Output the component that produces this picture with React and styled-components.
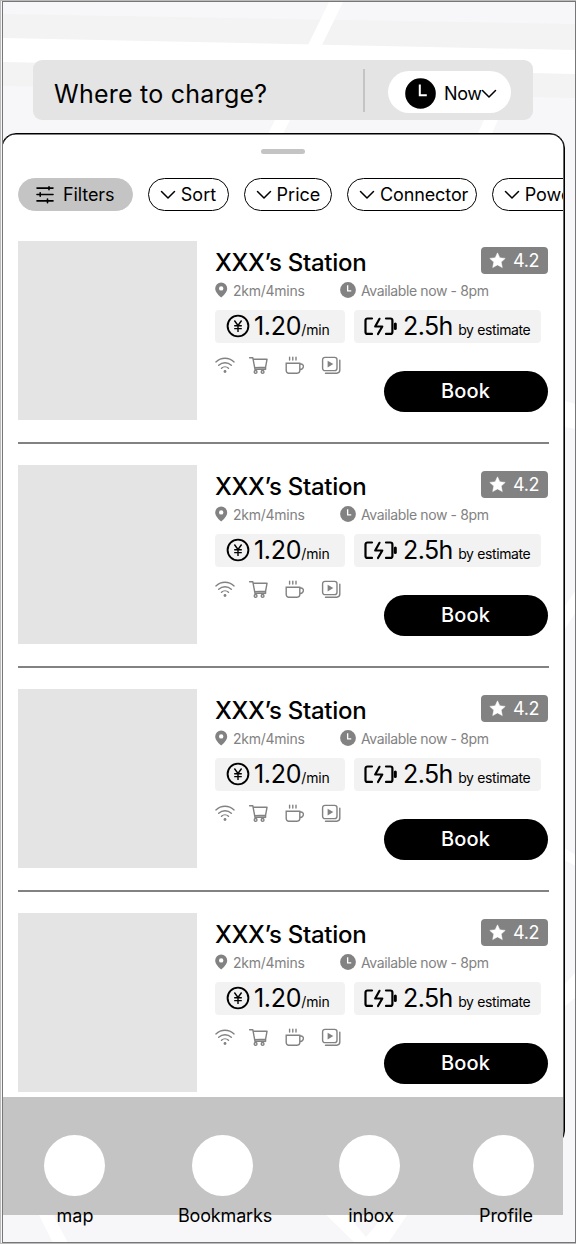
import React from 'react'
import styled, { createGlobalStyle } from 'styled-components'

const GlobalStyle = createGlobalStyle`
  * {
    box-sizing: border-box;
  }

  body {
    margin: 0;
    background: #f7f6f9;
    font-family: Inter, 'Liberation Sans', sans-serif;
    color: #000;
  }
`

const Screen = styled.div`
  position: relative;
  width: 576px;
  height: 1244px;
  overflow: hidden;
  background: #f7f6f9;
  border: 1px solid #bbb;
  border-width: 1px 0 1px 1px;
`

const Frame = styled.div`
  display: flex;
  flex-direction: column;
  position: relative;
  height: 1242px;
  margin-left: 1px;
  overflow: hidden;
  border: 1px solid #777;
`

const MapArt = styled.svg`
  position: absolute;
  top: 0;
  left: 0;
`

const SearchBar = styled.div`
  position: relative;
  display: flex;
  align-items: center;
  width: 500px;
  height: 60px;
  margin: 58px 0 0 30px;
  padding-left: 21px;
  flex-shrink: 0;
  background: #e4e4e4;
  border-radius: 9px;
`

const Placeholder = styled.span`
  width: 309px;
  margin-top: 7px;
  font-size: 25px;
  letter-spacing: 0.25px;
  white-space: nowrap;
`

const Divider = styled.div`
  width: 2px;
  height: 43px;
  margin-right: 23px;
  background: #c4c4c4;
`

const TimePill = styled.div`
  display: flex;
  align-items: center;
  width: 123px;
  height: 42px;
  padding: 4px 0 0 17px;
  margin-top: 3px;
  background: #fff;
  border-radius: 21px;
  font-size: 18px;
`

const NowText = styled.span`
  width: 37px;
  margin-left: 8px;
  letter-spacing: -0.35px;
  white-space: nowrap;
`

const Sheet = styled.div`
  position: relative;
  width: 564px;
  height: 1013px;
  margin: 13px 0 0 -2px;
  flex-shrink: 0;
  overflow: hidden;
  background: #fff;
  border: 1px solid #000;
  border-radius: 15px;
  box-shadow: inset 0 0 0 0.6px #000;
`

const Handle = styled.div`
  width: 44px;
  height: 5px;
  margin: 15px 0 0 259px;
  background: #c4c4c4;
  border-radius: 2.5px;
`

const Chips = styled.div`
  display: flex;
  gap: 14.8px;
  margin: 24px 1px 0 0;
  padding-left: 16px;
  overflow: hidden;
`

const Chip = styled.div`
  display: flex;
  align-items: center;
  flex-shrink: 0;
  width: ${(props) => props.$width}px;
  height: 33px;
  padding-left: ${(props) => (props.$filled ? 16 : 11)}px;
  gap: ${(props) => (props.$filled ? 8 : 5)}px;
  background: ${(props) => (props.$filled ? '#c4c4c4' : '#fff')};
  border: 1px solid ${(props) => (props.$filled ? '#c4c4c4' : '#000')};
  border-radius: 17px;
  font-size: 18px;
  letter-spacing: ${(props) => props.$spacing || 0}px;
  white-space: nowrap;
`

const List = styled.div`
  margin: 30px 0 0 16px;
  width: 531px;
`

const Card = styled.div`
  display: flex;
  height: 224px;
`

const Photo = styled.div`
  width: 179px;
  height: 179px;
  flex-shrink: 0;
  background: #e4e4e4;
`

const Info = styled.div`
  display: flex;
  flex-direction: column;
  width: 333px;
  margin-left: 18px;
`

const TitleRow = styled.div`
  display: flex;
  justify-content: space-between;
  height: 39px;
  padding-top: 6px;
`

const Title = styled.h2`
  margin: 0;
  font-size: 24px;
  line-height: 32px;
  font-weight: 500;
  letter-spacing: -0.3px;
`

const Rating = styled.div`
  display: flex;
  align-items: center;
  width: 67px;
  height: 27px;
  padding-left: 8px;
  gap: 7px;
  background: #828282;
  border-radius: 4px;
  color: #fff;
  font-size: 18px;
  letter-spacing: -0.3px;
`

const MetaRow = styled.div`
  display: flex;
  align-items: center;
  height: 20px;
  color: #828282;
  font-size: 14px;
`

const Meta = styled.span`
  display: flex;
  align-items: center;
  gap: 5px;
  width: ${(props) => props.$width}px;
  letter-spacing: ${(props) => props.$spacing}px;
  white-space: nowrap;
`

const StatRow = styled.div`
  display: flex;
  gap: 9px;
  margin-top: 10px;
`

const Stat = styled.div`
  display: flex;
  align-items: center;
  width: ${(props) => props.$width}px;
  height: 33px;
  padding: 0 0 2px ${(props) => props.$pad}px;
  background: #f2f2f2;
  border-radius: 4px;
  white-space: nowrap;
`

const StatText = styled.span`
  display: flex;
  align-items: baseline;
  margin-left: ${(props) => props.$gap}px;
`

const Value = styled.span`
  font-size: 25px;
  letter-spacing: ${(props) => props.$spacing}px;
`

const Unit = styled.span`
  font-size: 14px;
  letter-spacing: ${(props) => props.$spacing || 0}px;
  margin-left: ${(props) => props.$gap || 0}px;
`

const BottomRow = styled.div`
  display: flex;
  justify-content: space-between;
`

const Amenities = styled.div`
  display: flex;
  margin-top: 13px;
  gap: 15.2px;
  color: #828282;
`

const BookButton = styled.button`
  width: 164px;
  height: 41px;
  margin: 28px 0 0;
  padding: 0 1px 0 0;
  background: #000;
  border: 0;
  border-radius: 21px;
  color: #fff;
  font-family: inherit;
  font-size: 20px;
  line-height: 41px;
  font-weight: 500;
  letter-spacing: 0.15px;
`

const Rule = styled.hr`
  width: 531px;
  height: 1.5px;
  margin: -23px 0 21.5px;
  border: 0;
  background: #828282;
`

const TabBar = styled.nav`
  position: absolute;
  left: 0;
  bottom: 27px;
  display: flex;
  width: 560px;
  height: 118px;
  padding: 38px 0 0 41px;
  background: #c4c4c4;
`

const Tab = styled.div`
  display: flex;
  flex-direction: column;
  align-items: center;
  width: 61px;
  margin-right: ${(props) => props.$gap}px;
`

const TabCircle = styled.div`
  width: 61px;
  height: 61px;
  flex-shrink: 0;
  background: #fff;
  border-radius: 50%;
`

const TabLabel = styled.span`
  margin: ${(props) => props.$shift || '9px 0 0'};
  font-size: 18px;
  line-height: 22px;
  letter-spacing: ${(props) => props.$spacing}px;
  white-space: nowrap;
`

const Chevron = () => (
  <svg width="16" height="10" viewBox="0 0 16 10" fill="none" stroke="currentColor" strokeWidth="1.5" strokeLinecap="round" strokeLinejoin="round">
    <path d="M1.5 1.5 8 8l6.5-6.5" />
  </svg>
)

const ClockIcon = ({ size, hand }) => (
  <svg width={size} height={size} viewBox="0 0 31 31" fill="none">
    <circle cx="15.5" cy="15.5" r="15.3" fill="currentColor" />
    <path d="M14.8 6.5v10.7h7" stroke="#fff" strokeWidth={hand} />
  </svg>
)

const FilterIcon = () => (
  <svg width="20" height="18" viewBox="0 0 20 18" fill="none" stroke="#000" strokeWidth="1.6" strokeLinecap="round">
    <path d="M2 2.1h16M2 8.5h16M2 14.9h16M14 .8v2.9M5.2 6.7v3.6M12.5 13.1v3.6" />
  </svg>
)

const StarIcon = () => (
  <svg width="17" height="17" viewBox="0 0 17 17" fill="#fff">
    <path d="m8.5.8 2.3 5 5.4.6-4 3.7 1.1 5.5-4.8-2.7-4.8 2.7 1.1-5.5-4-3.7 5.4-.6z" stroke="#fff" strokeWidth=".5" strokeLinejoin="round" />
  </svg>
)

const PinIcon = () => (
  <svg width="13" height="16" viewBox="0 0 13 16" fill="currentColor">
    <path fillRule="evenodd" d="M6.2.5a6 6 0 0 1 6 6c0 3.8-4 7.4-6 9-2-1.6-6-5.2-6-9a6 6 0 0 1 6-6zm0 3.7a2.2 2.2 0 1 0 0 4.4 2.2 2.2 0 0 0 0-4.4z" />
  </svg>
)

const YenIcon = () => (
  <svg width="24" height="24" viewBox="0 0 24 24" fill="none" stroke="#000" strokeWidth="1.9">
    <circle cx="12" cy="12" r="10.4" />
    <path d="m8.4 6.5 3.6 5 3.6-5M12 11.5V18M8.2 11.8h7.6M8.2 14.6h7.6" strokeWidth="1.4" />
  </svg>
)

const BatteryIcon = () => (
  <svg width="35" height="20" viewBox="0 0 35 20" fill="none" stroke="#000" strokeWidth="2.2" strokeLinecap="round" strokeLinejoin="round">
    <path d="M9 2.5H4.5a2 2 0 0 0-2 2v11.4a2 2 0 0 0 2 2H9M23 2.5h4.4a2 2 0 0 1 2 2v11.4a2 2 0 0 1-2 2H23" />
    <path d="m16.5 2.8-4.3 7.7h7.1L15 18" />
    <path d="M32.3 8v4.6" strokeWidth="3" />
  </svg>
)

const WifiIcon = () => (
  <svg width="20" height="18" viewBox="0 0 20 18" fill="none" stroke="currentColor" strokeWidth="1.4" strokeLinecap="round">
    <path d="M.9 5.9c5.3-4.8 12.9-4.8 18.2 0M3.7 9.2c3.7-3.3 8.9-3.3 12.6 0M6.5 12.3c2-1.9 5-1.9 7 0" />
    <circle cx="10" cy="15.5" r="1.4" fill="currentColor" stroke="none" />
  </svg>
)

const CartIcon = () => (
  <svg width="20" height="18" viewBox="1.2 0 20 18" overflow="visible" fill="none" stroke="currentColor" strokeWidth="1.4" strokeLinecap="round" strokeLinejoin="round">
    <path d="M.8 1.7H4l2.2 11.6h10.6M4.3 3.3h13.9l-1.4 7.9-11 .4M16.8 11.2v2.1" />
    <circle cx="6.8" cy="15.9" r="1.4" />
    <circle cx="13.8" cy="15.9" r="1.4" />
  </svg>
)

const CupIcon = () => (
  <svg width="20" height="18" viewBox="0 0 20 18" fill="none" stroke="currentColor" strokeWidth="1.4" strokeLinecap="round">
    <path d="M1.2 7.2h13.6v7.4a2.6 2.6 0 0 1-2.6 2.6H3.8a2.6 2.6 0 0 1-2.6-2.6zM14.8 8h1.4a2.2 2.2 0 0 1 2.2 2.2c0 2.2-1.7 3.2-3.6 3.6M4.6 1.3V4M7.8 1.3V4M11 1.3V4" />
  </svg>
)

const VideoIcon = () => (
  <svg width="20" height="18" viewBox="0 0 20 18" fill="none" stroke="currentColor" strokeWidth="1.4" strokeLinecap="round">
    <rect x="1.6" y="1.4" width="14.4" height="13.2" rx="2.4" />
    <path d="M18.8 4.2v9.9a3.1 3.1 0 0 1-3.1 3.1H4.5" />
    <path d="M6.6 4.7v6.8l5.7-3.4z" fill="currentColor" stroke="none" />
  </svg>
)

const filters = [
  { label: 'Sort', width: 81 },
  { label: 'Price', width: 88.5 },
  { label: 'Connector', width: 130, spacing: -0.1 },
  { label: 'Power', width: 95 },
]

const tabs = [
  { label: 'map', gap: 87, spacing: 0, shift: '9px 0 0 1px' },
  { label: 'Bookmarks', gap: 86, spacing: -0.15, shift: '9px 0 0 5px' },
  { label: 'inbox', gap: 73, spacing: -0.1, shift: '9px 0 0 3px' },
  { label: 'Profile', gap: 0, spacing: -0.1, shift: '9px 0 0 5px' },
]

const StationCard = () => (
  <Card>
    <Photo />
    <Info>
      <TitleRow>
        <Title>XXX’s Station</Title>
        <Rating>
          <StarIcon />
          4.2
        </Rating>
      </TitleRow>
      <MetaRow>
        <Meta $width={125} $spacing={-0.25}>
          <PinIcon />
          2km/4mins
        </Meta>
        <Meta $width={160} $spacing={-0.38}>
          <ClockIcon size={16} hand={2.6} />
          Available now - 8pm
        </Meta>
      </MetaRow>
      <StatRow>
        <Stat $width={130} $pad={11}>
          <YenIcon />
          <StatText $gap={4}>
            <Value $spacing={-0.3}>1.20</Value>
            <Unit $spacing={-0.1}>/min</Unit>
          </StatText>
        </Stat>
        <Stat $width={187} $pad={9}>
          <BatteryIcon />
          <StatText $gap={5}>
            <Value $spacing={-0.6}>2.5h</Value>
            <Unit $gap={5.5} $spacing={-0.38}>by estimate</Unit>
          </StatText>
        </Stat>
      </StatRow>
      <BottomRow>
        <Amenities>
          <WifiIcon />
          <CartIcon />
          <CupIcon />
          <VideoIcon />
        </Amenities>
        <BookButton>Book</BookButton>
      </BottomRow>
    </Info>
  </Card>
)

const App = () => (
  <>
    <GlobalStyle />
    <Screen>
      <Frame>
        <MapArt width="572" height="1240" viewBox="3 2 572 1240">
          <path d="M0 14 576 24v74L0 86z" fill="#f3f3f3" />
          <path d="M0 38 576 50v24L0 62zM329 2h14L322 45h-14zM275 120h15l-10 20h-15zM484 120h14l-9 20h-14zM564 401l12 3v25l-12-2zM576 590v22l-12 18v-23zM564 848l12 7v11l-12-6zM576 972v25l-12 10v-22z" fill="#fff" />
          <path d="M34 1205h14l20 38H53zM316 1205h23l27 32 27-32h21l-26 38h-33z" fill="#fff" />
        </MapArt>
        <SearchBar>
          <Placeholder>Where to charge?</Placeholder>
          <Divider />
          <TimePill>
            <ClockIcon size={31} hand={2} />
            <NowText>Now</NowText>
            <Chevron />
          </TimePill>
        </SearchBar>
        <Sheet>
          <Handle />
          <Chips>
            <Chip $filled $width={115} $spacing={-0.1}>
              <FilterIcon />
              Filters
            </Chip>
            {filters.map((f) => (
              <Chip key={f.label} $width={f.width} $spacing={f.spacing}>
                <Chevron />
                {f.label}
              </Chip>
            ))}
          </Chips>
          <List>
            {[0, 1, 2, 3].map((i) => (
              <React.Fragment key={i}>
                {i > 0 && <Rule />}
                <StationCard />
              </React.Fragment>
            ))}
          </List>
        </Sheet>
        <TabBar>
          {tabs.map((t) => (
            <Tab key={t.label} $gap={t.gap}>
              <TabCircle />
              <TabLabel $shift={t.shift} $spacing={t.spacing}>
                {t.label}
              </TabLabel>
            </Tab>
          ))}
        </TabBar>
      </Frame>
    </Screen>
  </>
)

export default App
